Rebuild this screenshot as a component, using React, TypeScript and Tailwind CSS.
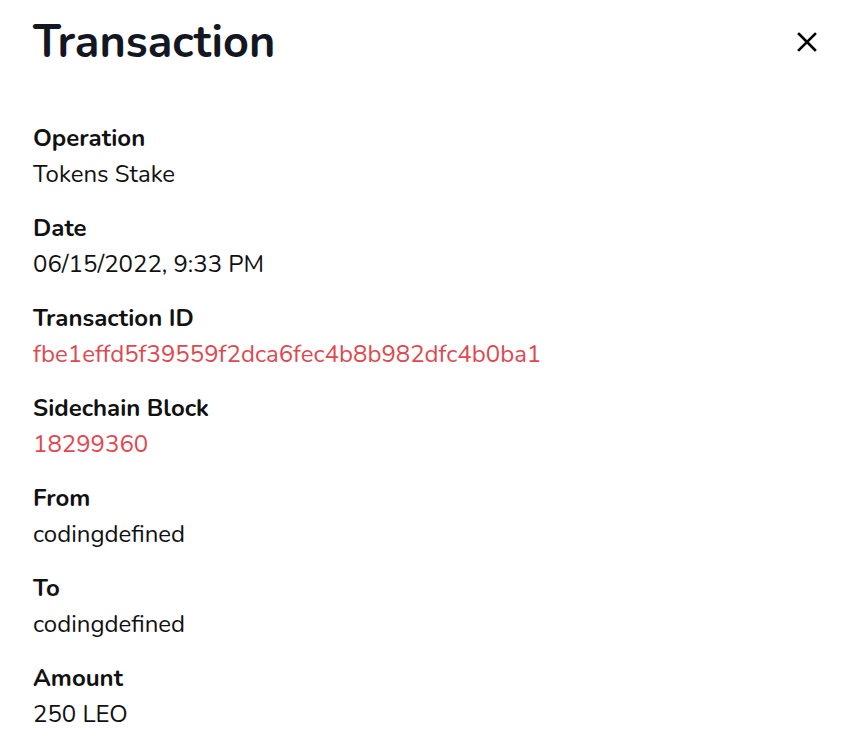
const rows = [
  { label: "Operation", value: "Tokens Stake" },
  { label: "Date", value: "06/15/2022, 9:33 PM" },
  { label: "Transaction ID", value: "fbe1effd5f39559f2dca6fec4b8b982dfc4b0ba1", link: true },
  { label: "Sidechain Block", value: "18299360", link: true },
  { label: "From", value: "codingdefined" },
  { label: "To", value: "codingdefined" },
  { label: "Amount", value: "250 LEO" },
];

export default function App() {
  return (
    <div className="w-[854px] h-[737px] bg-white px-[33px] font-['Nunito','Lato',sans-serif] text-[#111111]">
      <div className="flex items-center justify-between h-[84px]">
        <h1 className="text-[45px] font-bold text-[#131722] leading-none">Transaction</h1>
        <button className="mr-[3px] text-black">
          <svg width="22" height="22" viewBox="0 0 22 22" fill="none" stroke="currentColor" strokeWidth="2.6" strokeLinecap="square">
            <path d="M3 3L19 19M19 3L3 19" />
          </svg>
        </button>
      </div>
      <div className="flex flex-col gap-[18px] pt-[36px]">
        {rows.map((r) => (
          <div key={r.label} className="flex flex-col">
            <div className="text-[24px] font-bold leading-[36px]">{r.label}</div>
            <div className={`text-[24px] leading-[36px] ${r.link ? "text-[#e0484f]" : "text-[#111111]"}`}>
              {r.value}
            </div>
          </div>
        ))}
      </div>
    </div>
  );
}
